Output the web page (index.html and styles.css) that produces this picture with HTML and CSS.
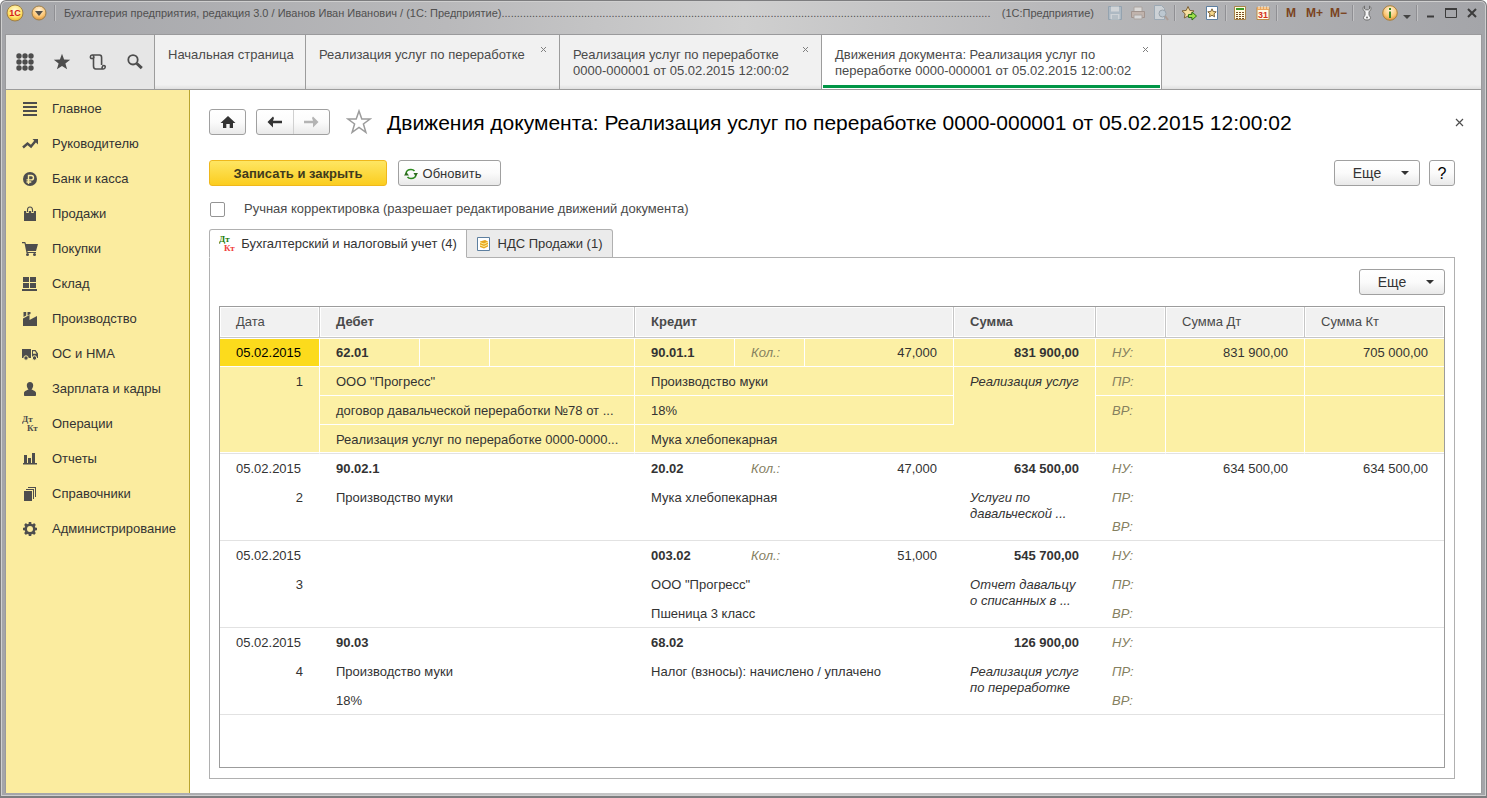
FILE: index.html
```
<!DOCTYPE html>
<html lang="ru">
<head>
<meta charset="utf-8">
<title>Движения документа</title>
<link rel="stylesheet" href="styles.css">
</head>
<body>
<div class="window">
  <header class="titlebar">
    <button class="round logo" aria-label="1С"><svg width="18" height="18" viewBox="0 0 18 18"><defs><radialGradient id="gy" cx=".5" cy=".35" r=".7"><stop offset="0" stop-color="#fffbe0"/><stop offset=".6" stop-color="#ffe36a"/><stop offset="1" stop-color="#e8a81c"/></radialGradient><radialGradient id="go" cx=".5" cy=".3" r=".75"><stop offset="0" stop-color="#fff3dc"/><stop offset=".6" stop-color="#fcc776"/><stop offset="1" stop-color="#d98a2c"/></radialGradient></defs><circle cx="9" cy="9" r="8" fill="url(#gy)" stroke="#9c7f4e"/><text x="9" y="12" class="logo-text">1С</text></svg></button>
    <button class="round menu" aria-label="Меню"><svg width="18" height="18" viewBox="0 0 18 18"><circle cx="9" cy="9" r="7" fill="url(#go)" stroke="#9c7f4e"/><path d="M5 7h8l-4 5z" fill="#54504a"/></svg></button>
    <i class="sep"></i>
    <span class="app-title">Бухгалтерия предприятия, редакция 3.0 / Иванов Иван Иванович / (1С: Предприятие)</span>
    <span class="dots" aria-hidden="true">................................................................................................................................................................</span>
    <span class="app-kind">(1С:Предприятие)</span>
    <div class="sys">
      <button class="sys-btn faded" aria-label="Сохранить"><svg width="16" height="16" viewBox="0 0 16 16"><path d="M1.500 1.500h13v13h-13z" fill="#a9bccb" stroke="#7f97aa"/><path d="M4 1.500h8v5H4z" fill="#e4e9ed"/><path d="M3.500 9h9v5.500h-9z" fill="#dfe6eb"/><path d="M5 11h6M5 13h6" stroke="#8da3b4"/></svg></button>
      <button class="sys-btn faded" aria-label="Печать"><svg width="16" height="16" viewBox="0 0 16 16"><path d="M4 2h8v5H4z" fill="#f4f0ec" stroke="#a69a92"/><path d="M1.500 6.500h13v6h-13z" fill="#c9b3a6" stroke="#957f74"/><path d="M4 10h8v4H4z" fill="#eee" stroke="#a69a92"/></svg></button>
      <button class="sys-btn faded" aria-label="Просмотр"><svg width="16" height="16" viewBox="0 0 16 16"><path d="M1.500.500h7l3 3v11h-10z" fill="#dfe6ec" stroke="#8da3b4"/><circle cx="9.500" cy="8.500" r="3.500" fill="#c3d5e2" stroke="#8797a3"/><path d="M12 11l3 4" stroke="#a98f80" stroke-width="2"/></svg></button>
      <i class="sep"></i>
      <button class="sys-btn" aria-label="В избранное"><svg width="16" height="16" viewBox="0 0 16 16"><path d="M7 1.500l1.800 3.900 4.200.5-3.100 2.900.8 4.200L7 11l-3.700 2 .8-4.200L1 5.900l4.200-.5z" fill="#f7dfa0" stroke="#7e6238"/><path d="M7.500 9.500H11V7l4.500 4-4.500 4v-2.500H7.500z" fill="#9ee04a" stroke="#2f7316"/></svg></button>
      <button class="sys-btn" aria-label="Избранное"><svg width="16" height="16" viewBox="0 0 16 16"><path d="M2.500 1.500h11v13h-11z" fill="#fff" stroke="#5d7fa0"/><path d="M8 3.800l1.200 2.700 3 .3-2.200 2 .6 3L8 10.300l-2.600 1.500.6-3-2.200-2 3-.3z" fill="#f5d78a" stroke="#7e6238"/></svg></button>
      <i class="sep"></i>
      <button class="sys-btn" aria-label="Калькулятор"><svg width="16" height="16" viewBox="0 0 16 16"><path d="M2.500 1.500h11v13h-11z" fill="#fffbe0" stroke="#a88348"/><path d="M4 3h8v2H4z" fill="#3e9a28"/><path d="M4 7.500h8M4 9.500h8M4 11.500h8M4 13.500h8" stroke="#7a4b20" stroke-dasharray="2 1"/></svg></button>
      <button class="sys-btn" aria-label="Календарь"><svg width="16" height="16" viewBox="0 0 16 16"><path d="M2 2.500h12v12H2z" fill="#fffbe8" stroke="#b98a48"/><path d="M2 2h12v3H2z" fill="#eaa55c"/><path d="M4 1v3M7 1v3M10 1v3M13 1v3" stroke="#fff3d8"/><text x="8" y="13" class="cal-text">31</text></svg></button>
      <i class="sep"></i>
      <button class="sys-btn mem">M</button>
      <button class="sys-btn mem">M+</button>
      <button class="sys-btn mem">M−</button>
      <i class="sep"></i>
      <button class="sys-btn" aria-label="Настройка"><svg width="16" height="16" viewBox="0 0 16 16"><path d="M5.500 1C3.500 2 3.500 5.500 6 6.500v4c-1 .7-1.500 1.500-1.500 2.300 0 3 7 3 7 0 0-.8-.5-1.600-1.500-2.300v-4C12.500 5.500 12.500 2 10.500 1v3l-1 .8h-3L5.500 4z" fill="#f6f6f6" stroke="#6d6d6d"/><circle cx="8" cy="12.500" r="1" fill="#6d6d6d"/></svg></button>
      <button class="sys-btn" aria-label="Информация"><svg width="16" height="16" viewBox="0 0 16 16"><circle cx="8" cy="8" r="7.300" fill="url(#go)" stroke="#a8803f"/><path d="M7 3h2v2H7zM7 6.500h2V13H7z" fill="#3d8a24"/></svg></button>
      <button class="sys-btn thin" aria-label="Ещё"><svg width="8" height="16" viewBox="0 0 8 16"><path d="M0 10h8l-4 4z" fill="#444"/></svg></button>
      <i class="sep"></i>
      <button class="sys-btn win" aria-label="Свернуть"><svg width="12" height="16" viewBox="0 0 12 16"><path d="M3 11.500h7" stroke="#3c3c3c" stroke-width="2"/></svg></button>
      <button class="sys-btn win" aria-label="Развернуть"><svg width="12" height="16" viewBox="0 0 12 16"><path d="M.500 3.500h11v9H.500z" fill="none" stroke="#3c3c3c"/><path d="M0 4h12" stroke="#3c3c3c" stroke-width="2"/></svg></button>
      <button class="sys-btn win" aria-label="Закрыть"><svg width="12" height="16" viewBox="0 0 12 16"><path d="M2 4l8 8M10 4l-8 8" stroke="#3c3c3c" stroke-width="2"/></svg></button>
    </div>
  </header>

  <div class="client">
    <nav class="tabbar">
      <div class="tools">
        <button aria-label="Разделы"><svg width="18" height="18" viewBox="0 0 18 18" fill="#4d4d4d"><circle cx="3" cy="3" r="2.700"/><circle cx="9" cy="3" r="2.700"/><circle cx="15" cy="3" r="2.700"/><circle cx="3" cy="9" r="2.700"/><circle cx="9" cy="9" r="2.700"/><circle cx="15" cy="9" r="2.700"/><circle cx="3" cy="15" r="2.700"/><circle cx="9" cy="15" r="2.700"/><circle cx="15" cy="15" r="2.700"/></svg></button>
        <button aria-label="Избранное"><svg width="18" height="18" viewBox="0 0 18 18"><path d="M9 .8l2.100 5.700 6.100.2-4.800 3.700 1.700 5.900L9 12.900l-5.100 3.400 1.700-5.900L.8 6.700l6.100-.2z" fill="#4d4d4d"/></svg></button>
        <button aria-label="История"><svg width="18" height="18" viewBox="0 0 18 18" fill="none" stroke="#4d4d4d" stroke-width="1.600"><path d="M4.500 5.500H2.800C.8 5.500 1 2 3 2h7.500C12 2 12.600 3 12.600 4.500V12M4.500 4v9c0 2 .7 3 2.300 3h7.500c2.200 0 2.700-3.500.5-3.500-2 0-1.200 2-2 3M4.500 5.500c.8-1 .4-3-1-3"/></svg></button>
        <button aria-label="Поиск"><svg width="18" height="18" viewBox="0 0 18 18"><circle cx="7" cy="6.800" r="4.700" fill="none" stroke="#4d4d4d" stroke-width="1.800"/><path d="M10.800 10.500l5 4.700" stroke="#4d4d4d" stroke-width="3"/></svg></button>
      </div>
      <div class="tab t1"><span>Начальная страница</span></div>
      <div class="tab t2"><span>Реализация услуг по переработке</span><button class="x" aria-label="Закрыть"><svg width="7" height="7" viewBox="0 0 7 7"><path d="M1 1l5 5M6 1L1 6" stroke="#808080"/></svg></button></div>
      <div class="tab t3"><span>Реализация услуг по переработке<br>0000-000001 от 05.02.2015 12:00:02</span><button class="x" aria-label="Закрыть"><svg width="7" height="7" viewBox="0 0 7 7"><path d="M1 1l5 5M6 1L1 6" stroke="#808080"/></svg></button></div>
      <div class="tab t4 active"><span>Движения документа: Реализация услуг по<br>переработке 0000-000001 от 05.02.2015 12:00:02</span><button class="x" aria-label="Закрыть"><svg width="7" height="7" viewBox="0 0 7 7"><path d="M1 1l5 5M6 1L1 6" stroke="#808080"/></svg></button></div>
    </nav>

    <div class="body">
      <aside class="sidebar">
        <a href="#"><svg width="16" height="16" viewBox="0 0 16 16"><path d="M1 1h14v2H1zM1 5h14v2H1zM1 9h14v2H1zM1 13h14v2H1z"/></svg>Главное</a>
        <a href="#"><svg width="16" height="16" viewBox="0 0 16 16"><path d="M1 11.500l4.500-4 3.500 3L13.500 5" fill="none" stroke="#4d4d4d" stroke-width="2.400"/><path d="M10.500 3H16v5.500z"/></svg>Руководителю</a>
        <a href="#"><svg width="16" height="16" viewBox="0 0 16 16"><circle cx="8" cy="8" r="7"/><path d="M6.500 13V4.500h2.800a2.200 2.200 0 010 4.400H4.500M4.500 11h4.800" fill="none" stroke="#fbec9f" stroke-width="1.400"/></svg>Банк и касса</a>
        <a href="#"><svg width="16" height="16" viewBox="0 0 16 16"><path d="M2 5h12v10H2z"/><path d="M5.500 7V4c0-4 5-4 5 0v3" fill="none" stroke="#fbec9f" stroke-width="2.600"/><path d="M5.500 6V4c0-4 5-4 5 0v2" fill="none" stroke="#4d4d4d" stroke-width="1.100"/></svg>Продажи</a>
        <a href="#"><svg width="16" height="16" viewBox="0 0 16 16"><path d="M0 1h3.200l.8 2h12l-2 7H5.500l.2 1H14v1H4.500L2.500 2.200H0z"/><circle cx="5.500" cy="13.500" r="1.500"/><circle cx="12.500" cy="13.500" r="1.500"/></svg>Покупки</a>
        <a href="#"><svg width="16" height="16" viewBox="0 0 16 16"><path d="M1 1h6v5H1zM8 1h6v5H8zM1 7h6v5H1zM8 7h6v5H8zM0 13h15v2H0z"/></svg>Склад</a>
        <a href="#"><svg width="16" height="16" viewBox="0 0 16 16"><path d="M1 15V7.500L7.500 4v5L15 5v10zM1.500 1h2.700v3.500L1.500 6zM5.500 1h3v2L5.500 4.500z"/></svg>Производство</a>
        <a href="#"><svg width="16" height="16" viewBox="0 0 16 16"><path d="M0 3h9v9H0zM10 4h3.500L16 7.500V12h-6z"/><path d="M11 5.300h2l1.500 2.500H11z" fill="#fbec9f"/><circle cx="4" cy="12" r="2.200" stroke="#fbec9f"/><circle cx="12.500" cy="12" r="2.200" stroke="#fbec9f"/></svg>ОС и НМА</a>
        <a href="#"><svg width="16" height="16" viewBox="0 0 16 16"><path d="M8 1c2 0 3.200 1.300 3.200 3.300C11.200 6 10.300 8 9.500 8.500c1.500.8 4.500 1.300 4.500 3.500v2c0 .6-.4 1-1 1H3c-.6 0-1-.4-1-1v-2c0-2.200 3-2.700 4.500-3.500C5.700 8 4.800 6 4.800 4.300 4.800 2.300 6 1 8 1z"/></svg>Зарплата и кадры</a>
        <a href="#"><svg width="16" height="16" viewBox="0 0 16 16"><text x="0" y="6" class="dk">Дт</text><text x="5" y="15" class="dk">Кт</text></svg>Операции</a>
        <a href="#"><svg width="16" height="16" viewBox="0 0 16 16"><path d="M2 4h3v9H2zM6 7h3v6H6zM10 2h3v11h-3zM1 12h14v1.500H1z"/></svg>Отчеты</a>
        <a href="#"><svg width="16" height="16" viewBox="0 0 16 16"><path d="M2 5h8v10H2zM4 3h8v10h-1V4H4zM6 1h8v10h-1V2H6z"/></svg>Справочники</a>
        <a href="#"><svg width="16" height="16" viewBox="0 0 16 16"><circle cx="8" cy="8" r="4.200" fill="none" stroke="#4d4d4d" stroke-width="2.800"/><path d="M8 1v14M1 8h14M3 3l10 10M13 3L3 13" fill="none" stroke="#4d4d4d" stroke-width="2.600"/><circle cx="8" cy="8" r="3" fill="#fbec9f"/></svg>Администрирование</a>
      </aside>

      <main class="content">
        <div class="heading">
          <button class="btn home" aria-label="Домой"><svg width="16" height="14" viewBox="0 0 16 14"><path d="M8 1l7.500 7H13v5H9.700V9H6.300v4H3V8H.500z" fill="#333"/></svg></button>
          <div class="nav-pair">
            <button aria-label="Назад"><svg width="16" height="12" viewBox="0 0 16 12"><path d="M6 .500L.500 6 6 11.500V7.300h9V4.700H6L7 2z" fill="#333"/></svg></button>
            <button aria-label="Вперед"><svg width="16" height="12" viewBox="0 0 16 12"><path d="M10 .500L15.500 6 10 11.500V7.300H1V4.700h9L9 2z" fill="#b4b4b4"/></svg></button>
          </div>
          <button class="fav" aria-label="В избранное"><svg width="26" height="26" viewBox="0 0 26 26"><path d="M13 2l2.800 8H24l-6.600 5 2.500 8.300L13 18.400l-6.900 4.900L8.600 15 2 10h8.200z" fill="#fff" stroke="#9c9c9c" stroke-width="1.500"/></svg></button>
          <h1>Движения документа: Реализация услуг по переработке 0000-000001 от 05.02.2015 12:00:02</h1>
          <button class="close" aria-label="Закрыть"><svg width="9" height="9" viewBox="0 0 9 9"><path d="M1 1l7 7M8 1L1 8" stroke="#4d4d4d" stroke-width="1.200"/></svg></button>
        </div>

        <div class="commands">
          <button class="btn primary">Записать и закрыть</button>
          <button class="btn refresh"><svg width="14" height="12" viewBox="0 0 14 12"><path d="M2 7V5.500C2.300 3 4.500 1.500 7 1.500c1.600 0 2.700.5 3.500 1.500M12 5v1.500C11.700 9 9.500 10.500 7 10.500c-1.600 0-2.700-.5-3.500-1.500" fill="none" stroke="#2d8a1e" stroke-width="1.600"/><path d="M0 7.500h5L2.300 4zM9.500 5h4.500l-2.300 3.500z" fill="#2d6b1e"/></svg>Обновить</button>
          <button class="btn more">Еще<i class="arrow"></i></button>
          <button class="btn help">?</button>
        </div>

        <div class="check"><input type="checkbox" id="manual"><label for="manual">Ручная корректировка (разрешает редактирование движений документа)</label></div>

        <div class="page-tabs">
          <button class="ptab on"><svg width="16" height="16" viewBox="0 0 16 16"><text x="0" y="6" class="dk green">Дт</text><text x="5" y="15" class="dk red">Кт</text></svg>Бухгалтерский и налоговый учет (4)</button>
          <button class="ptab off"><svg width="14" height="14" viewBox="0 0 14 14"><path d="M.500.500h12v13H.500z" fill="#fff" stroke="#5d7fa0"/><path d="M3 4.500l5-1.500 3 1.500v5L7 11.500l-4-1.500z" fill="#e8a820"/><path d="M3 5.500l4 1.500 4-2M3 8l4 1.500L11 7.500" fill="none" stroke="#fff0a0"/></svg>НДС Продажи (1)</button>
        </div>

        <section class="panel">
          <div class="panel-bar"><button class="btn more">Еще<i class="arrow"></i></button></div>
          <div class="grid">
            <table>
              <colgroup><col class="w100"><col class="w100"><col class="w70"><col class="w145"><col class="w100"><col class="w70"><col class="w149"><col class="w142"><col class="w70"><col class="w139"><col class="w139"></colgroup>
              <thead><tr><th>Дата</th><th colspan="3" class="b">Дебет</th><th colspan="3" class="b">Кредит</th><th class="b">Сумма</th><th></th><th>Сумма Дт</th><th>Сумма Кт</th></tr></thead>
              <tbody class="selected">
                <tr><td class="current">05.02.2015</td><td class="b">62.01</td><td></td><td></td><td class="b">90.01.1</td><td class="k">Кол.:</td><td class="n">47,000</td><td class="b n">831 900,00</td><td class="k">НУ:</td><td class="n">831 900,00</td><td class="n">705 000,00</td></tr>
                <tr><td class="n end" rowspan="3">1</td><td colspan="3">ООО "Прогресс"</td><td colspan="3">Производство муки</td><td class="d end" rowspan="3">Реализация услуг</td><td class="k">ПР:</td><td></td><td></td></tr>
                <tr><td colspan="3">договор давальческой переработки №78 от ...</td><td colspan="3">18%</td><td class="k end" rowspan="2">ВР:</td><td class="end" rowspan="2"></td><td class="end" rowspan="2"></td></tr>
                <tr><td class="end" colspan="3">Реализация услуг по переработке 0000-0000...</td><td class="end" colspan="3">Мука хлебопекарная</td></tr>
              </tbody>
              <tbody>
                <tr><td>05.02.2015</td><td class="b" colspan="3">90.02.1</td><td class="b">20.02</td><td class="k">Кол.:</td><td class="n">47,000</td><td class="b n">634 500,00</td><td class="k">НУ:</td><td class="n">634 500,00</td><td class="n">634 500,00</td></tr>
                <tr><td class="n end" rowspan="2">2</td><td colspan="3">Производство муки</td><td colspan="3">Мука хлебопекарная</td><td class="d end" rowspan="2">Услуги по<br>давальческой ...</td><td class="k">ПР:</td><td></td><td></td></tr>
                <tr><td class="end" colspan="3"></td><td class="end" colspan="3"></td><td class="k end">ВР:</td><td class="end"></td><td class="end"></td></tr>
              </tbody>
              <tbody>
                <tr><td>05.02.2015</td><td colspan="3"></td><td class="b">003.02</td><td class="k">Кол.:</td><td class="n">51,000</td><td class="b n">545 700,00</td><td class="k">НУ:</td><td></td><td></td></tr>
                <tr><td class="n end" rowspan="2">3</td><td colspan="3"></td><td colspan="3">ООО "Прогресс"</td><td class="d end" rowspan="2">Отчет давальцу<br>о списанных в ...</td><td class="k">ПР:</td><td></td><td></td></tr>
                <tr><td class="end" colspan="3"></td><td class="end" colspan="3">Пшеница 3 класс</td><td class="k end">ВР:</td><td class="end"></td><td class="end"></td></tr>
              </tbody>
              <tbody>
                <tr><td>05.02.2015</td><td class="b" colspan="3">90.03</td><td class="b" colspan="3">68.02</td><td class="b n">126 900,00</td><td class="k">НУ:</td><td></td><td></td></tr>
                <tr><td class="n end" rowspan="2">4</td><td colspan="3">Производство муки</td><td colspan="3">Налог (взносы): начислено / уплачено</td><td class="d end" rowspan="2">Реализация услуг<br>по переработке</td><td class="k">ПР:</td><td></td><td></td></tr>
                <tr><td class="end" colspan="3">18%</td><td class="end" colspan="3"></td><td class="k end">ВР:</td><td class="end"></td><td class="end"></td></tr>
              </tbody>
            </table>
          </div>
        </section>
      </main>
    </div>
  </div>
</div>
</body>
</html>
```
FILE: styles.css
```
* { box-sizing: border-box; }
body { margin: 0; font: 13px/16px "Liberation Sans", Arial, sans-serif; color: #333; background: #fff; }
button { font: inherit; color: inherit; margin: 0; padding: 0; border: 0; background: none; display: flex; align-items: center; justify-content: center; }
svg { display: block; flex: none; }

.window { min-height: 100vh; display: flex; flex-direction: column; padding: 0 4px 3px; border: 1px solid #7d7d7f; border-width: 1px 1px 2px; border-radius: 6px 6px 0 0; background: linear-gradient(90deg, #a4a5a9, #b9b9bb 30%, #cfcfcf 50%, #b9b9bb 70%, #a4a5a9); box-shadow: inset 0 0 0 1px #cfcfcf; }

.titlebar { height: 33px; flex: none; display: flex; align-items: center; padding: 0 0 9px 1px; font-size: 11px; color: #505050; white-space: nowrap; }
.round { width: 18px; margin-right: 6px; }
.logo-text { font: bold 9px "Liberation Sans", sans-serif; fill: #d3201a; text-anchor: middle; }
.sep { width: 1px; height: 16px; flex: none; background: #8f8f93; border-right: 1px solid #c2c2c4; box-sizing: content-box; }
.app-title { margin-left: 8px; }
.dots { flex: 1; overflow: hidden; }
.app-kind { margin: 0 13px 0 4px; }
.sys { display: flex; align-items: center; gap: 7px; padding-right: 3px; }
.sys .sep { margin: 0 -2px; }
.sys-btn { min-width: 16px; }
.faded { opacity: .6; }
.mem { font-size: 12px; font-weight: bold; color: #7a4320; }
.thin { min-width: 8px; margin-left: -2px; }
.win { min-width: 14px; }
.cal-text { font: bold 9px "Liberation Sans", sans-serif; fill: #d3301a; text-anchor: middle; }

.client { flex: 1; display: flex; flex-direction: column; background: #fff; border: 1px solid #9a9a9c; border-width: 1px 1px 0; }
.tabbar { display: flex; height: 55px; flex: none; background: linear-gradient(#f1f1f1 92%, #e0e0e0); border-bottom: 1px solid #9c9c9c; color: #4a4a4a; }
.tools { display: flex; align-items: center; justify-content: space-between; width: 149px; padding: 0 10px; background: #e6e6e6; border-right: 1px solid #9c9c9c; }
.tab { position: relative; padding: 12px 13px; border-right: 1px solid #9c9c9c; white-space: nowrap; }
.t1 { width: 151px; }
.t2 { width: 254px; }
.t3 { width: 262px; }
.t4 { width: 340px; }
.active { background: #fff; }
.active::after { content: ""; position: absolute; left: 1px; right: 1px; bottom: 1px; height: 3px; background: #009646; }
.x { position: absolute; top: 11px; right: 12px; }

.body { flex: 1; display: flex; }
.sidebar { width: 184px; flex: none; padding-top: 1px; background: #fbec9f; border-right: 1px solid #b9a52f; }
.sidebar a { display: flex; align-items: center; gap: 14px; height: 35px; padding-left: 16px; color: #333; text-decoration: none; white-space: nowrap; fill: #4d4d4d; }
.dk { font: bold 9px "Liberation Serif", serif; }
.green { fill: #1d7d0a; }
.red { fill: #f0403c; }

.content { flex: 1; min-width: 0; display: flex; flex-direction: column; padding: 19px 26px 14px 19px; }
.btn { height: 26px; border: 1px solid #a0a0a0; border-radius: 3px; background: linear-gradient(#fff, #fbfbfb 50%, #e9e9e9); }
.heading { display: flex; align-items: center; height: 26px; margin-right: -9px; }
.home { width: 37px; margin-right: 10px; }
.nav-pair { display: flex; width: 74px; height: 26px; border: 1px solid #a0a0a0; border-radius: 3px; background: linear-gradient(#fff, #fbfbfb 50%, #e9e9e9); }
.nav-pair button { flex: 1; }
.nav-pair button + button { border-left: 1px solid #d0d0d0; }
.fav { margin: 0 15px 0 16px; }
h1 { flex: 1; margin: 0; padding-top: 2px; font-size: 21px; line-height: 26px; font-weight: normal; color: #000; white-space: nowrap; }
.commands { display: flex; margin-top: 25px; }
.commands .btn { padding-top: 1px; }
.primary { width: 178px; margin-right: 11px; font-weight: bold; color: #403a1c; border-color: #efb81c; background: linear-gradient(#fee663, #fbcd1f); }
.refresh { width: 103px; gap: 5px; padding-right: 14px; }
.more { width: 86px; gap: 20px; padding-left: 8px; font-size: 14px; }
.commands .more { margin: 0 9px 0 auto; padding-top: 0; }
.help { width: 26px; font-size: 16px; color: #000; }
.arrow { border: 4px solid transparent; border-top: 4px solid #333; border-bottom: 0; }
.check { display: flex; align-items: center; gap: 19px; height: 16px; margin-top: 15px; color: #4a4a4a; }
.check input { appearance: none; width: 15px; height: 15px; margin: 0 0 0 1px; border: 1px solid #949494; border-radius: 2px; background: #fff; }

.page-tabs { display: flex; margin-top: 12px; height: 29px; position: relative; }
.ptab { border: 1px solid #b0b0b0; white-space: nowrap; }
.on { width: 258px; gap: 6px; background: #fff; border-bottom-color: #fff; border-radius: 3px 0 0 0; }
.off { width: 146px; gap: 7px; background: #ebebeb; border-left: 0; border-radius: 0 3px 0 0; }
.panel { flex: 1; display: flex; flex-direction: column; margin-top: -1px; padding: 11px 9px 10px; border: 1px solid #b0b0b0; }
.panel-bar { display: flex; justify-content: flex-end; margin-bottom: 11px; }
.grid { flex: 1; border: 1px solid #9c9c9c; }

table { width: 100%; table-layout: fixed; border-spacing: 0; }
.w70 { width: 70px; }
.w100 { width: 100px; }
.w139 { width: 139px; }
.w142 { width: 142px; }
.w145 { width: 145px; }
.w149 { width: 149px; }
th, td { padding: 7px 17px 5px 16px; text-align: left; vertical-align: top; white-space: nowrap; font-weight: normal; }
th { height: 31px; color: #4a4a4a; background: #f1f1f1; border-right: 1px solid #c6c6c6; border-bottom: 1px solid #c6c6c6; box-shadow: inset 0 0 0 1px #fff; }
th:last-child { border-right: 0; }
td { height: 29px; border-bottom: 1px solid transparent; }
td:last-child { padding-right: 16px; }
.selected td { padding-right: 16px; background: #fcf0a5; background-clip: padding-box; border-right: 1px solid #fff; border-bottom-color: #fff; }
.selected td:last-child { border-right: 0; }
.selected tr:first-child td { box-shadow: inset 0 1px #fff; }
td.end, .selected td.end { border-bottom-color: #e2e2e2; }
.selected td.end { box-shadow: inset 0 -1px #fff; }
.selected td.current { background-color: #fcdb1c; color: #000; }
.b { font-weight: bold; }
.n { text-align: right; }
.k { font-style: italic; color: #85805f; }
td.d, .selected td.d { font-style: italic; padding-right: 0; }
```
